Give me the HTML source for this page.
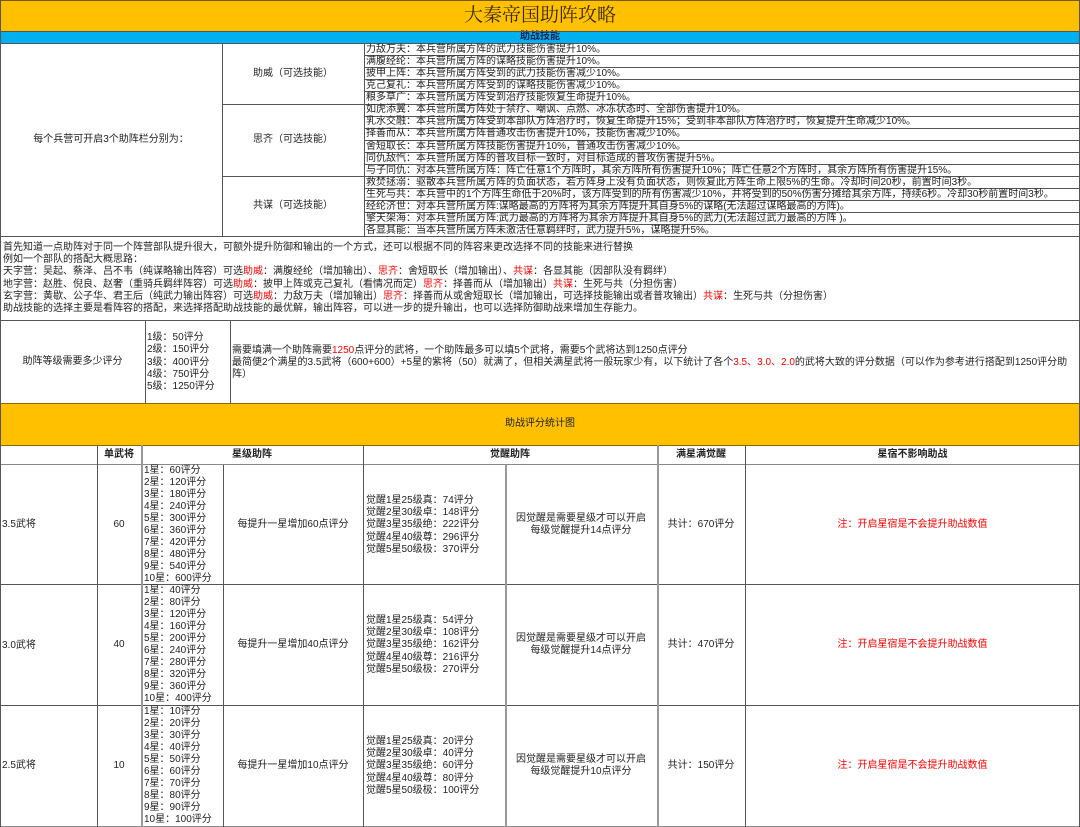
<!DOCTYPE html>
<html><head><meta charset="utf-8">
<style>
*{margin:0;padding:0;box-sizing:border-box}
body{width:1080px;height:827px;position:relative;background:#fff;overflow:hidden;font-family:"Liberation Sans","Noto Sans CJK SC",sans-serif;font-size:10px;color:#222;line-height:12px}
.a{position:absolute}
.h{position:absolute;height:1px;background:#555}
.v{position:absolute;width:1px;background:#555}
.c{position:absolute;display:flex;align-items:center;justify-content:center;text-align:center;white-space:nowrap}
.n{white-space:nowrap}
.r{color:#f00}
b{font-weight:bold}
</style></head><body>
<div class="a" style="left:0;top:0;width:1080px;height:31px;background:#FFC000"></div>
<div class="c" style="left:0;top:0;width:1080px;height:31px;font-family:'Liberation Serif','Noto Serif CJK SC',serif;font-size:19px;color:#3a2a00">大秦帝国助阵攻略</div>
<div class="a" style="left:0;top:31px;width:1080px;height:12px;background:#00B0F0"></div>
<div class="c" style="left:0;top:31px;width:1080px;height:12px;font-weight:bold;color:#102050;font-size:10px">助战技能</div>
<div class="a" style="left:0;top:403px;width:1080px;height:42px;background:#FFC000"></div>

<div class="h" style="left:0;top:0;width:1080px;background:#7a5a00"></div>
<div class="h" style="left:0;top:31px;width:1080px"></div>
<div class="h" style="left:0;top:43px;width:1080px"></div>
<div class="h" style="left:364px;top:55px;width:716px"></div>
<div class="h" style="left:364px;top:67px;width:716px"></div>
<div class="h" style="left:364px;top:79px;width:716px"></div>
<div class="h" style="left:364px;top:91px;width:716px"></div>
<div class="h" style="left:222px;top:104px;width:858px"></div>
<div class="h" style="left:364px;top:116px;width:716px"></div>
<div class="h" style="left:364px;top:128px;width:716px"></div>
<div class="h" style="left:364px;top:140px;width:716px"></div>
<div class="h" style="left:364px;top:152px;width:716px"></div>
<div class="h" style="left:364px;top:164px;width:716px"></div>
<div class="h" style="left:222px;top:176px;width:858px"></div>
<div class="h" style="left:364px;top:188px;width:716px"></div>
<div class="h" style="left:364px;top:200px;width:716px"></div>
<div class="h" style="left:364px;top:212px;width:716px"></div>
<div class="h" style="left:364px;top:224px;width:716px"></div>
<div class="h" style="left:0;top:236px;width:1080px"></div>
<div class="h" style="left:0;top:320px;width:1080px"></div>
<div class="h" style="left:0;top:403px;width:1080px;background:#8a6a00"></div>
<div class="h" style="left:0;top:445px;width:1080px;background:#8a6a00"></div>
<div class="h" style="left:0;top:464px;width:1080px;background:#888"></div>
<div class="h" style="left:0;top:584px;width:1080px"></div>
<div class="h" style="left:0;top:705px;width:1080px"></div>
<div class="h" style="left:0;top:826px;width:1080px;background:#888"></div>

<div class="v" style="left:0;top:0;height:827px"></div>
<div class="v" style="left:1079px;top:0;height:827px"></div>
<div class="v" style="left:222px;top:43px;height:193px"></div>
<div class="v" style="left:364px;top:43px;height:193px"></div>
<div class="v" style="left:145px;top:320px;height:83px"></div>
<div class="v" style="left:230px;top:320px;height:83px"></div>
<div class="v" style="left:97px;top:445px;height:382px"></div>
<div class="v" style="left:141px;top:445px;height:382px;background:#999;width:2px"></div>
<div class="v" style="left:363px;top:445px;height:382px"></div>
<div class="v" style="left:657px;top:445px;height:382px;background:#999;width:2px"></div>
<div class="v" style="left:745px;top:445px;height:382px"></div>
<div class="v" style="left:223px;top:465px;height:362px"></div>
<div class="v" style="left:505px;top:465px;height:362px;background:#999;width:2px"></div>

<div class="c" style="left:0;top:43px;width:222px;height:193px">每个兵营可开启3个助阵栏分别为：</div>
<div class="c" style="left:222px;top:43px;width:142px;height:61px">助威（可选技能）</div>
<div class="c" style="left:222px;top:104px;width:142px;height:72px">思齐（可选技能）</div>
<div class="c" style="left:222px;top:176px;width:142px;height:60px">共谋（可选技能）</div>
<div class="a n" style="left:366px;top:44px;line-height:12.06px">
力敌万夫：本兵营所属方阵的武力技能伤害提升10%。<br>
满腹经纶：本兵营所属方阵的谋略技能伤害提升10%。<br>
披甲上阵：本兵营所属方阵受到的武力技能伤害减少10%。<br>
克己复礼：本兵营所属方阵受到的谋略技能伤害减少10%。<br>
粮多草广：本兵营所属方阵受到治疗技能恢复生命提升10%。<br>
如虎添翼：本兵营所属方阵处于禁疗、嘲讽、点燃、冰冻状态时、全部伤害提升10%。<br>
乳水交融：本兵营所属方阵受到本部队方阵治疗时，恢复生命提升15%；受到非本部队方阵治疗时，恢复提升生命减少10%。<br>
择善而从：本兵营所属方阵普通攻击伤害提升10%，技能伤害减少10%。<br>
舍短取长：本兵营所属方阵技能伤害提升10%，普通攻击伤害减少10%。<br>
同仇敌忾：本兵营所属方阵的普攻目标一致时，对目标造成的普攻伤害提升5%。<br>
与子同仇：对本兵营所属方阵：阵亡任意1个方阵时，其余方阵所有伤害提升10%；阵亡任意2个方阵时，其余方阵所有伤害提升15%。<br>
救焚拯溺：驱散本兵营所属方阵的负面状态，若方阵身上没有负面状态，则恢复此方阵生命上限5%的生命。冷却时间20秒，前置时间3秒。<br>
生死与共：本兵营中的1个方阵生命低于20%时，该方阵受到的所有伤害减少10%，并将受到的50%伤害分摊给其余方阵，持续6秒。冷却30秒前置时间3秒。<br>
经纶济世：对本兵营所属方阵:谋略最高的方阵将为其余方阵提升其自身5%的谋略(无法超过谋略最高的方阵)。<br>
擎天架海：对本兵营所属方阵:武力最高的方阵将为其余方阵提升其自身5%的武力(无法超过武力最高的方阵 )。<br>
各显其能：当本兵营所属方阵未激活任意羁绊时，武力提升5%，谋略提升5%。
</div>

<div class="a n" style="left:3px;top:242px;line-height:12.2px">
首先知道一点助阵对于同一个阵营部队提升很大，可额外提升防御和输出的一个方式，还可以根据不同的阵容来更改选择不同的技能来进行替换<br>
例如一个部队的搭配大概思路：<br>
天字营：吴起、蔡泽、吕不韦（纯谋略输出阵容）可选<span class="r">助威</span>：满腹经纶（增加输出）、<span class="r">思齐</span>：舍短取长（增加输出）、<span class="r">共谋</span>：各显其能（因部队没有羁绊）<br>
地字营：赵胜、倪良、赵奢（重骑兵羁绊阵容）可选<span class="r">助威</span>：披甲上阵或克己复礼（看情况而定）<span class="r">思齐</span>：择善而从（增加输出）<span class="r">共谋</span>：生死与共（分担伤害）<br>
玄字营：黄歇、公子华、君王后（纯武力输出阵容）可选<span class="r">助威</span>：力敌万夫（增加输出）<span class="r">思齐</span>：择善而从或舍短取长（增加输出，可选择技能输出或者普攻输出）<span class="r">共谋</span>：生死与共（分担伤害）<br>
助战技能的选择主要是看阵容的搭配，来选择搭配助战技能的最优解，输出阵容，可以进一步的提升输出，也可以选择防御助战来增加生存能力。
</div>

<div class="c" style="left:0;top:320px;width:145px;height:83px">助阵等级需要多少评分</div>
<div class="a n" style="left:147px;top:332px;line-height:12.25px">1级：50评分<br>2级：150评分<br>3级：400评分<br>4级：750评分<br>5级：1250评分</div>
<div class="a" style="left:232px;top:345px;width:845px;line-height:12px">需要填满一个助阵需要<span class="r">1250</span>点评分的武将，一个助阵最多可以填5个武将，需要5个武将达到1250点评分<br>最简便2个满星的3.5武将（600+600）+5星的紫将（50）就满了，但相关满星武将一般玩家少有，以下统计了各个<span class="r">3.5、3.0、2.0</span>的武将大致的评分数据（可以作为参考进行搭配到1250评分助阵）</div>

<div class="c" style="left:0;top:403px;width:1080px;height:42px">助战评分统计图</div>

<div class="c" style="left:97px;top:445px;width:44px;height:19px;font-weight:bold">单武将</div>
<div class="c" style="left:141px;top:445px;width:222px;height:19px;font-weight:bold">星级助阵</div>
<div class="c" style="left:363px;top:445px;width:294px;height:19px;font-weight:bold">觉醒助阵</div>
<div class="c" style="left:657px;top:445px;width:88px;height:19px;font-weight:bold">满星满觉醒</div>
<div class="c" style="left:745px;top:445px;width:335px;height:19px;font-weight:bold">星宿不影响助战</div>

<div class="a n" style="left:2px;top:519px">3.5武将</div>
<div class="c" style="left:97px;top:465px;width:44px;height:119px">60</div>
<div class="a n" style="left:144px;top:465px;line-height:12px">1星：60评分<br>2星：120评分<br>3星：180评分<br>4星：240评分<br>5星：300评分<br>6星：360评分<br>7星：420评分<br>8星：480评分<br>9星：540评分<br>10星：600评分</div>
<div class="c" style="left:223px;top:465px;width:140px;height:119px">每提升一星增加60点评分</div>
<div class="a n" style="left:366px;top:495px;line-height:12.2px">觉醒1星25级真：74评分<br>觉醒2星30级卓：148评分<br>觉醒3星35级绝：222评分<br>觉醒4星40级尊：296评分<br>觉醒5星50级极：370评分</div>
<div class="c" style="left:505px;top:465px;width:152px;height:119px">因觉醒是需要星级才可以开启<br>每级觉醒提升14点评分</div>
<div class="c" style="left:657px;top:465px;width:88px;height:119px">共计：670评分</div>
<div class="c r" style="left:745px;top:465px;width:335px;height:119px">注：开启星宿是不会提升助战数值</div>

<div class="a n" style="left:2px;top:640px">3.0武将</div>
<div class="c" style="left:97px;top:585px;width:44px;height:120px">40</div>
<div class="a n" style="left:144px;top:585px;line-height:12px">1星：40评分<br>2星：80评分<br>3星：120评分<br>4星：160评分<br>5星：200评分<br>6星：240评分<br>7星：280评分<br>8星：320评分<br>9星：360评分<br>10星：400评分</div>
<div class="c" style="left:223px;top:585px;width:140px;height:120px">每提升一星增加40点评分</div>
<div class="a n" style="left:366px;top:615px;line-height:12.2px">觉醒1星25级真：54评分<br>觉醒2星30级卓：108评分<br>觉醒3星35级绝：162评分<br>觉醒4星40级尊：216评分<br>觉醒5星50级极：270评分</div>
<div class="c" style="left:505px;top:585px;width:152px;height:120px">因觉醒是需要星级才可以开启<br>每级觉醒提升14点评分</div>
<div class="c" style="left:657px;top:585px;width:88px;height:120px">共计：470评分</div>
<div class="c r" style="left:745px;top:585px;width:335px;height:120px">注：开启星宿是不会提升助战数值</div>

<div class="a n" style="left:2px;top:760px">2.5武将</div>
<div class="c" style="left:97px;top:706px;width:44px;height:120px">10</div>
<div class="a n" style="left:144px;top:706px;line-height:12px">1星：10评分<br>2星：20评分<br>3星：30评分<br>4星：40评分<br>5星：50评分<br>6星：60评分<br>7星：70评分<br>8星：80评分<br>9星：90评分<br>10星：100评分</div>
<div class="c" style="left:223px;top:706px;width:140px;height:120px">每提升一星增加10点评分</div>
<div class="a n" style="left:366px;top:736px;line-height:12.2px">觉醒1星25级真：20评分<br>觉醒2星30级卓：40评分<br>觉醒3星35级绝：60评分<br>觉醒4星40级尊：80评分<br>觉醒5星50级极：100评分</div>
<div class="c" style="left:505px;top:706px;width:152px;height:120px">因觉醒是需要星级才可以开启<br>每级觉醒提升10点评分</div>
<div class="c" style="left:657px;top:706px;width:88px;height:120px">共计：150评分</div>
<div class="c r" style="left:745px;top:706px;width:335px;height:120px">注：开启星宿是不会提升助战数值</div>
</body></html>
